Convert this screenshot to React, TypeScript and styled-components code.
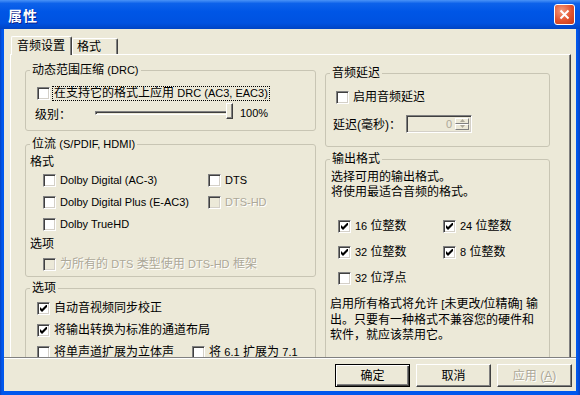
import React from "react";
import styled, { createGlobalStyle } from "styled-components";

const Global = createGlobalStyle`
  html, body { margin: 0; padding: 0; background: #fff; }
  body {
    font-family: "Liberation Sans", "Noto Sans CJK SC", sans-serif;
    font-size: 12px;
    color: #000;
  }
`;

const Window = styled.div`
  width: 580px;
  height: 395px;
  display: flex;
  flex-direction: column;
  background: linear-gradient(to right, #0842c0 0px, #0058ee 2px, #0058ee 577px, #0842c0 580px);
  overflow: hidden;
`;

const TitleBar = styled.div`
  height: 29px;
  flex: none;
  display: flex;
  align-items: center;
  justify-content: space-between;
  padding: 0 5px 0 8px;
  background: linear-gradient(to bottom, #4a93f7 0%, #0d62ea 12%, #0056e6 40%, #0052e0 80%, #0044c4 100%);
`;

const Title = styled.div`
  color: #fff;
  font-weight: bold;
  font-size: 14px;
  letter-spacing: 1px;
  text-shadow: 1px 1px 0 #0a1f8a;
`;

const CloseBtn = styled.div`
  width: 21px;
  height: 21px;
  box-sizing: border-box;
  border: 1px solid #fff;
  border-radius: 3px;
  background: radial-gradient(circle at 35% 30%, #f49a7c 0%, #e2532f 55%, #c23818 100%);
  display: flex;
  align-items: center;
  justify-content: center;
`;

const Client = styled.div`
  flex: 1;
  margin: 0 4px 4px 4px;
  background: #ece9d8;
  display: flex;
  flex-direction: column;
  min-height: 0;
`;

const TabStrip = styled.div`
  height: 25px;
  flex: none;
  display: flex;
  align-items: flex-end;
  padding-left: 7px;
  box-sizing: border-box;
  position: relative;
  z-index: 1;
`;

const Tab = styled.div<{ $active?: boolean }>`
  box-sizing: border-box;
  height: ${p => (p.$active ? 19 : 16)}px;
  margin-bottom: ${p => (p.$active ? -1 : 0)}px;
  padding: ${p => (p.$active ? "0 6px 0 5px" : "0 16px 0 4px")};
  display: flex;
  align-items: center;
  background: #ece9d8;
  border: 1px solid;
  border-color: #fff #404040 transparent #fff;
  border-bottom: none;
  box-shadow: inset -1px 0 0 #808080;
  border-radius: 2px 2px 0 0;
  line-height: 14px;
`;

const Panel = styled.div`
  height: 303px;
  flex: none;
  margin: 0 5px 0 6px;
  box-sizing: border-box;
  border-top: 1px solid #fff;
  border-left: 1px solid #fff;
  border-right: 1px solid #404040;
  box-shadow: inset -1px 0 0 #808080;
  overflow: hidden;
  display: grid;
  grid-template-columns: 291px 225px;
  column-gap: 9px;
  align-items: start;
  padding: 8px 0 0 14px;
`;

const Column = styled.div<{ $mt?: number }>`
  display: flex;
  flex-direction: column;
  margin-top: ${p => p.$mt ?? 0}px;
`;

const Group = styled.fieldset<{ $h: number; $mt?: number }>`
  margin: ${p => p.$mt ?? 0}px 0 0 0;
  padding: 0;
  height: ${p => p.$h}px;
  box-sizing: border-box;
  min-width: 0;
  border: 1px solid #c8c5b4;
  border-radius: 3px;
  flex: none;
`;

const Legend = styled.legend`
  padding: 0 2px;
  margin-left: 4px;
  line-height: 14px;
  height: 14px;
`;

const Lat = styled.span`
  font-size: 11px;
`;

const Body = styled.div<{ $pt?: number; $pl?: number }>`
  padding: ${p => p.$pt ?? 0}px 0 0 ${p => p.$pl ?? 0}px;
`;

const Row = styled.div<{ $h?: number; $mt?: number; $pl?: number }>`
  display: flex;
  align-items: center;
  height: ${p => p.$h ?? 22}px;
  margin-top: ${p => p.$mt ?? 0}px;
  padding-left: ${p => p.$pl ?? 0}px;
`;

const CheckGrid = styled.div<{ $cols: string; $row: number; $pl: number; $mt?: number }>`
  display: grid;
  grid-template-columns: ${p => p.$cols};
  grid-auto-rows: ${p => p.$row}px;
  align-items: center;
  padding-left: ${p => p.$pl}px;
  margin-top: ${p => p.$mt ?? 0}px;
`;

const Heading = styled.div<{ $mt?: number; $pl?: number }>`
  line-height: 14px;
  height: 14px;
  margin-top: ${p => p.$mt ?? 0}px;
  padding-left: ${p => p.$pl ?? 0}px;
`;

const CheckWrap = styled.label`
  display: flex;
  align-items: center;
`;

const Box = styled.span<{ $disabled?: boolean }>`
  width: 13px;
  height: 13px;
  box-sizing: border-box;
  flex: none;
  border: 1px solid;
  border-color: #808080 #fff #fff #808080;
  box-shadow: inset 1px 1px 0 #404040, inset -1px -1px 0 #d4d0c8;
  background: ${p => (p.$disabled ? "#ece9d8" : "#fff")};
  display: flex;
  align-items: center;
  justify-content: center;
`;

const Caption = styled.span<{ $disabled?: boolean; $focus?: boolean }>`
  margin-left: ${p => (p.$focus ? 3 : 4)}px;
  line-height: 13px;
  white-space: nowrap;
  color: ${p => (p.$disabled ? "#aca899" : "#000")};
  text-shadow: ${p => (p.$disabled ? "1px 1px 0 #fff" : "none")};
  outline: ${p => (p.$focus ? "1px dotted #000" : "none")};
  padding: ${p => (p.$focus ? "0 1px" : "0")};
`;

type CheckProps = {
  checked?: boolean;
  disabled?: boolean;
  focus?: boolean;
  children: React.ReactNode;
};

const Check: React.FC<CheckProps> = ({ checked, disabled, focus, children }) => (
  <CheckWrap>
    <Box $disabled={disabled}>
      {checked && (
        <svg width="7" height="7" viewBox="0 0 7 7">
          <polygon points="0,2 2,4 6,0 7,0 7,2 2,7 0,5" fill="#000" />
        </svg>
      )}
    </Box>
    <Caption $disabled={disabled} $focus={focus}>
      {children}
    </Caption>
  </CheckWrap>
);

const LevelLabel = styled.span`
  width: 60px;
  flex: none;
`;

const Track = styled.div`
  position: relative;
  width: 136px;
  height: 4px;
  box-sizing: border-box;
  border-top: 1px solid #808080;
  border-left: 1px solid #808080;
  border-bottom: 1px solid #fff;
  border-right: 1px solid #fff;
  box-shadow: inset 1px 1px 0 #404040;
`;

const Thumb = styled.div`
  position: absolute;
  right: -3px;
  top: -9px;
  width: 7px;
  height: 16px;
  box-sizing: border-box;
  background: #ece9d8;
  border-left: 1px solid #fff;
  border-top: 1px solid #fff;
  border-right: 1px solid #404040;
  border-bottom: 1px solid #404040;
  box-shadow: inset -1px -1px 0 #808080;
`;

const Percent = styled.span`
  margin-left: 9px;
  font-size: 11px;
`;

const DelayLabel = styled.span`
  width: 73px;
  flex: none;
`;

const Spin = styled.div`
  width: 66px;
  height: 18px;
  box-sizing: border-box;
  display: flex;
  border: 1px solid;
  border-color: #808080 #fff #fff #808080;
  box-shadow: inset 1px 1px 0 #404040, inset -1px -1px 0 #d4d0c8;
  background: #ece9d8;
  padding: 2px;
`;

const SpinValue = styled.span`
  flex: 1;
  text-align: right;
  padding-right: 3px;
  font-size: 11px;
  line-height: 12px;
  color: #aca899;
`;

const SpinButtons = styled.div`
  width: 14px;
  display: flex;
  flex-direction: column;
`;

const SpinButton = styled.div`
  flex: 1;
  box-sizing: border-box;
  border: 1px solid;
  border-color: #fff #808080 #808080 #fff;
  display: flex;
  align-items: center;
  justify-content: center;
`;

const Text = styled.div<{ $lh: number; $mt?: number; $pl?: number }>`
  line-height: ${p => p.$lh}px;
  margin-top: ${p => p.$mt ?? 0}px;
  padding-left: ${p => p.$pl ?? 0}px;
  white-space: nowrap;
`;

const ButtonBar = styled.div`
  flex: 1;
  border-top: 1px solid #808080;
  box-shadow: inset 0 1px 0 #fff;
  display: flex;
  justify-content: flex-end;
  align-items: flex-start;
  gap: 6px;
  padding: 6px 4px 0 0;
`;

const Button = styled.div<{ $default?: boolean; $disabled?: boolean }>`
  width: 75px;
  height: 23px;
  box-sizing: border-box;
  display: flex;
  align-items: center;
  justify-content: center;
  background: #ece9d8;
  border: 1px solid;
  border-color: ${p => (p.$default ? "#000" : "#fff #404040 #404040 #fff")};
  box-shadow: ${p =>
    p.$default
      ? "inset 1px 1px 0 #fff, inset -1px -1px 0 #404040, inset -2px -2px 0 #808080"
      : "inset -1px -1px 0 #808080"};
  color: ${p => (p.$disabled ? "#aca899" : "#000")};
  text-shadow: ${p => (p.$disabled ? "1px 1px 0 #fff" : "none")};
  line-height: 14px;
`;

const Under = styled.span`
  text-decoration: underline;
`;

const Arrow: React.FC<{ up?: boolean }> = ({ up }) => (
  <svg width="5" height="3" viewBox="0 0 5 3">
    <polygon points={up ? "0,3 5,3 2.5,0" : "0,0 5,0 2.5,3"} fill="#aca899" />
  </svg>
);

export default function App() {
  return (
    <>
      <Global />
      <Window>
        <TitleBar>
          <Title>属性</Title>
          <CloseBtn>
            <svg width="11" height="11" viewBox="0 0 11 11">
              <path d="M1.5 1.5 L9.5 9.5 M9.5 1.5 L1.5 9.5" stroke="#fff" strokeWidth="2" />
            </svg>
          </CloseBtn>
        </TitleBar>
        <Client>
          <TabStrip>
            <Tab $active>音频设置</Tab>
            <Tab>格式</Tab>
          </TabStrip>
          <Panel>
            <Column>
              <Group $h={68}>
                <Legend>
                  动态范围压缩 <Lat>(DRC)</Lat>
                </Legend>
                <Body $pt={6}>
                  <Row $h={20} $pl={11}>
                    <Check focus>
                      在支持它的格式上应用 <Lat>DRC (AC3, EAC3)</Lat>
                    </Check>
                  </Row>
                  <Row $h={20} $pl={9}>
                    <LevelLabel>级别：</LevelLabel>
                    <Track>
                      <Thumb />
                    </Track>
                    <Percent>100%</Percent>
                  </Row>
                </Body>
              </Group>

              <Group $h={140} $mt={6}>
                <Legend>
                  位流 <Lat>(S/PDIF, HDMI)</Lat>
                </Legend>
                <Body>
                  <Heading $mt={4} $pl={4}>格式</Heading>
                  <CheckGrid $cols="165px auto" $row={22} $pl={17}>
                    <Check><Lat>Dolby Digital (AC-3)</Lat></Check>
                    <Check><Lat>DTS</Lat></Check>
                    <Check><Lat>Dolby Digital Plus (E-AC3)</Lat></Check>
                    <Check disabled><Lat>DTS-HD</Lat></Check>
                    <Check><Lat>Dolby TrueHD</Lat></Check>
                  </CheckGrid>
                  <Heading $mt={2} $pl={4}>选项</Heading>
                  <Row $mt={2} $pl={17}>
                    <Check disabled>
                      为所有的 <Lat>DTS</Lat> 类型使用 <Lat>DTS-HD</Lat> 框架
                    </Check>
                  </Row>
                </Body>
              </Group>

              <Group $h={100} $mt={4}>
                <Legend>选项</Legend>
                <Body $pt={2}>
                  <CheckGrid $cols="155px auto" $row={22} $pl={11}>
                    <Check checked>自动音视频同步校正</Check>
                    <span />
                    <Check checked>将输出转换为标准的通道布局</Check>
                    <span />
                    <Check>将单声道扩展为立体声</Check>
                    <Check>
                      将 <Lat>6.1</Lat> 扩展为 <Lat>7.1</Lat>
                    </Check>
                  </CheckGrid>
                </Body>
              </Group>
            </Column>

            <Column $mt={3}>
              <Group $h={81}>
                <Legend>音频延迟</Legend>
                <Body $pt={7}>
                  <Row $h={20} $pl={10}>
                    <Check>启用音频延迟</Check>
                  </Row>
                  <Row $h={19} $mt={7} $pl={7}>
                    <DelayLabel>延迟(毫秒)：</DelayLabel>
                    <Spin>
                      <SpinValue>0</SpinValue>
                      <SpinButtons>
                        <SpinButton><Arrow up /></SpinButton>
                        <SpinButton><Arrow /></SpinButton>
                      </SpinButtons>
                    </Spin>
                  </Row>
                </Body>
              </Group>

              <Group $h={230} $mt={5}>
                <Legend>输出格式</Legend>
                <Body $pt={4}>
                  <Text $lh={15} $pl={5}>
                    选择可用的输出格式。
                    <br />
                    将使用最适合音频的格式。
                  </Text>
                  <CheckGrid $cols="105px auto" $row={26} $pl={12} $mt={13}>
                    <Check checked><Lat>16</Lat> 位整数</Check>
                    <Check checked><Lat>24</Lat> 位整数</Check>
                    <Check checked><Lat>32</Lat> 位整数</Check>
                    <Check checked><Lat>8</Lat> 位整数</Check>
                    <Check><Lat>32</Lat> 位浮点</Check>
                  </CheckGrid>
                  <Text $lh={15.5} $mt={6} $pl={4}>
                    启用所有格式将允许 <Lat>[</Lat>未更改<Lat>/</Lat>位精确<Lat>]</Lat> 输
                    <br />
                    出。只要有一种格式不兼容您的硬件和
                    <br />
                    软件，就应该禁用它。
                  </Text>
                </Body>
              </Group>
            </Column>
          </Panel>
          <ButtonBar>
            <Button $default>确定</Button>
            <Button>取消</Button>
            <Button $disabled>
              应用 (<Under>A</Under>)
            </Button>
          </ButtonBar>
        </Client>
      </Window>
    </>
  );
}
